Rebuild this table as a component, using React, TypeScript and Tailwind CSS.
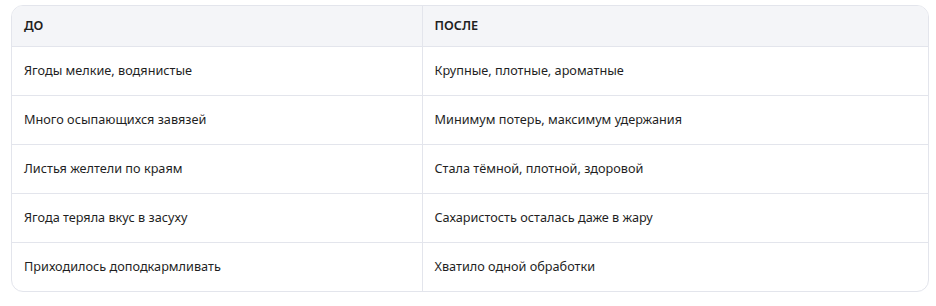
import React from 'react';

const rows: [string, string][] = [
  ['Ягоды мелкие, водянистые', 'Крупные, плотные, ароматные'],
  ['Много осыпающихся завязей', 'Минимум потерь, максимум удержания'],
  ['Листья желтели по краям', 'Стала тёмной, плотной, здоровой'],
  ['Ягода теряла вкус в засуху', 'Сахаристость осталась даже в жару'],
  ['Приходилось доподкармливать', 'Хватило одной обработки'],
];

const App: React.FC = () => {
  return (
    <div className="w-[936px] h-[306px] bg-white pt-[5px] pl-[11px] font-['Noto_Sans',sans-serif]">
      <div className="w-[918px] rounded-[12px] border border-[#e3e5ec] overflow-hidden">
        <table className="w-full border-collapse text-[12.7px] text-[#1f1f1f]">
          <thead>
            <tr className="bg-[#f4f5f8] h-[40px]">
              <th className="w-[410px] text-left font-semibold px-3 border-r border-[#e3e5ec]">ДО</th>
              <th className="text-left font-semibold px-3">ПОСЛЕ</th>
            </tr>
          </thead>
          <tbody>
            {rows.map(([a, b], i) => (
              <tr key={i} className="h-[49px] border-t border-[#e3e5ec]">
                <td className="px-3 border-r border-[#e3e5ec]">{a}</td>
                <td className="px-3">{b}</td>
              </tr>
            ))}
          </tbody>
        </table>
      </div>
    </div>
  );
};

export default App;
